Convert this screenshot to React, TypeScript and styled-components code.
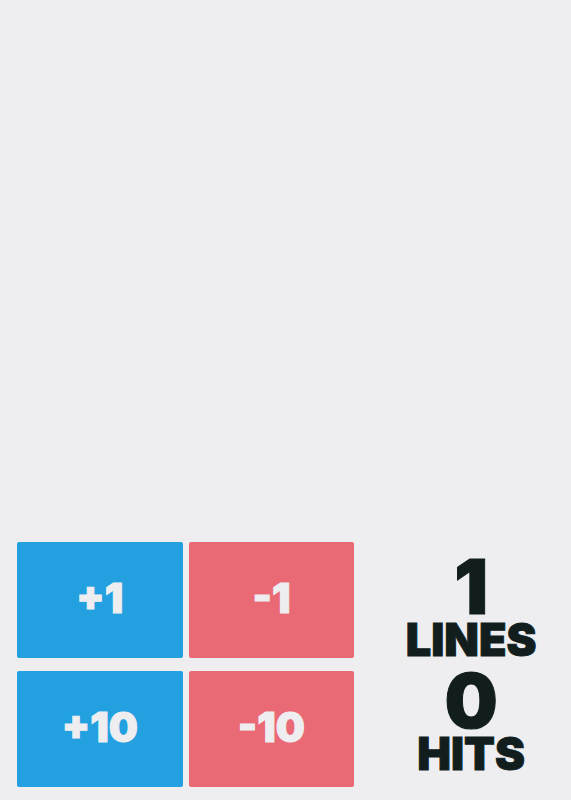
import React, { useState } from "react";
import styled, { createGlobalStyle } from "styled-components";

const GlobalStyle = createGlobalStyle`
  *, *::before, *::after { box-sizing: border-box; }
  body {
    margin: 0;
    background: #eeeef1;
    color: #121e1e;
    font-family: Inter, "Liberation Sans", sans-serif;
  }
`;

const Page = styled.main`
  min-height: 100vh;
  display: flex;
  flex-direction: column;
  justify-content: flex-end;
`;

const ControlBar = styled.section`
  display: grid;
  grid-template-columns: 5fr 3fr;
  align-items: center;
  padding: 0 0 13px 17px;
`;

const ButtonGrid = styled.div`
  display: grid;
  grid-template-columns: 1fr 1fr;
  gap: 13px 6px;
  margin-right: 9px;
`;

const StepButton = styled.button<{ $tone: "add" | "remove" }>`
  height: 116px;
  padding: 0 0 4px;
  border: 0;
  border-radius: 2px;
  background: ${({ $tone }) => ($tone === "add" ? "#22a0e0" : "#e96a74")};
  color: #eeeef1;
  font: 900 41px/48px Inter, "Liberation Sans", sans-serif;
  -webkit-text-stroke: 1px currentColor;
  cursor: pointer;
`;

const Stats = styled.div`
  display: flex;
  flex-direction: column;
  padding-left: 8px;
  text-align: center;
  font-weight: 900;
  -webkit-text-stroke: 1px currentColor;
`;

const Value = styled.div`
  font-size: 75px;
  line-height: 72px;
`;

const Label = styled.div`
  margin-bottom: 8px;
  font-size: 45px;
  line-height: 34px;
`;

const steps = [1, -1, 10, -10];

export default function App() {
  const [lines, setLines] = useState(1);
  const hits = 0;

  return (
    <Page>
      <GlobalStyle />
      <ControlBar>
        <ButtonGrid>
          {steps.map((step) => (
            <StepButton
              key={step}
              type="button"
              $tone={step > 0 ? "add" : "remove"}
              onClick={() => setLines((n) => Math.max(0, n + step))}
            >
              {step > 0 ? `+${step}` : step}
            </StepButton>
          ))}
        </ButtonGrid>
        <Stats>
          <Value>{lines}</Value>
          <Label>LINES</Label>
          <Value>{hits}</Value>
          <Label>HITS</Label>
        </Stats>
      </ControlBar>
    </Page>
  );
}
